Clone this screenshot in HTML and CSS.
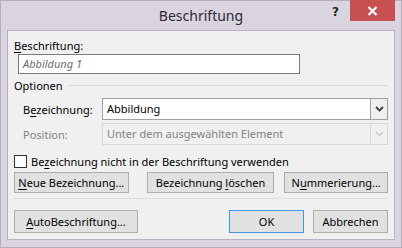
FILE: index.html
```html
<!DOCTYPE html>
<html>
<head>
<meta charset="utf-8">
<link rel="stylesheet" href="styles.css">
</head>
<body>
<div class="window">
  <div class="titlebar">
    <div class="title">Beschriftung</div>
    <div class="help">?</div>
    <div class="close">
      <svg width="11" height="10" viewBox="0 0 11 10"><path d="M1.5 1 L9.5 9 M9.5 1 L1.5 9" stroke="#fff" stroke-width="2.2" fill="none"/></svg>
    </div>
  </div>
  <div class="client">
    <div class="label top"><u>B</u>eschriftung:</div>
    <div class="textbox">Abbildung 1</div>
    <div class="group">
      <span>Optionen</span><span class="rule"></span>
    </div>
    <div class="row r1">
      <span class="rlabel">B<u>e</u>zeichnung:</span>
      <div class="combo">
        <span class="ctext">Abbildung</span>
        <span class="drop"><svg width="9" height="6" viewBox="0 0 9 6"><path d="M1 1 L4.5 4.5 L8 1" stroke="#404040" stroke-width="1.8" fill="none"/></svg></span>
      </div>
    </div>
    <div class="row r2 disabled">
      <span class="rlabel">Position:</span>
      <div class="combo">
        <span class="ctext">Unter dem ausgewählten Element</span>
        <span class="drop"><svg width="9" height="6" viewBox="0 0 9 6"><path d="M1 1 L4.5 4.5 L8 1" stroke="#c8c8c8" stroke-width="1.4" fill="none"/></svg></span>
      </div>
    </div>
    <div class="check">
      <span class="box"></span>
      <span class="ctext2">Be<u>z</u>eichnung nicht in der Beschriftung verwenden</span>
    </div>
    <div class="btnrow">
      <div class="btn b1"><span><u>N</u>eue Bezeichnung...</span></div>
      <div class="btn b2"><span>Bezeichnung <u>l</u>öschen</span></div>
      <div class="btn b3"><span>N<u>u</u>mmerierung...</span></div>
    </div>
    <div class="sep"></div>
    <div class="footer">
      <div class="btn auto"><span><u>A</u>utoBeschriftung...</span></div>
      <div class="spacer"></div>
      <div class="btn ok"><span>OK</span></div>
      <div class="btn cancel"><span>Abbrechen</span></div>
    </div>
  </div>
</div>
</body>
</html>
```

FILE: styles.css
```css
* { box-sizing: border-box; }
html, body { margin: 0; padding: 0; }
body {
  width: 402px; height: 248px; overflow: hidden;
  font-family: "Noto Sans", "Open Sans", sans-serif;
  font-size: 11px; color: #000;
}
u { text-decoration: underline; text-underline-offset: 2px; }
.window {
  width: 402px; height: 248px;
  background: #dad3e0;
  border: 1px solid #b4adbd;
  display: flex; flex-direction: column;
}
.titlebar {
  height: 29px; position: relative;
}
.title {
  position: absolute; left: 0; right: 0; top: 5px;
  text-align: center; font-size: 14px; color: #2b2b35;
}
.help {
  position: absolute; left: 331px; top: 4px;
  font-family: "DejaVu Sans", sans-serif; font-weight: bold; font-size: 12px; color: #222;
}
.close {
  position: absolute; left: 349px; top: -1px; width: 45px; height: 21px;
  background: #c75050;
  display: flex; align-items: center; justify-content: center;
}
.client {
  margin: 0 6px 7px 6px;
  flex: 1;
  background: #f0f0f0;
  border: 1px solid #b9b2c2;
  padding: 7px 6px 0 6px;
  display: flex; flex-direction: column;
}
.label.top { height: 16px; line-height: 16px; }
.textbox {
  margin-left: 4px;
  width: 282px; height: 20px;
  border: 1px solid #7a7a7a; background: #fff;
  font-style: italic; color: #6d6d6d;
  line-height: 18px; padding-left: 4px;
}
.group {
  margin-top: 3px; height: 17px; line-height: 17px;
  display: flex; align-items: center;
}
.group .rule { flex: 1; height: 1px; background: #dcdcdc; margin-left: 6px; }
.row { display: flex; align-items: center; height: 22px; padding-left: 9px; }
.r1 { margin-top: 4px; }
.r2 { margin-top: 3px; }
.rlabel { width: 79px; }
.combo {
  flex: 1; height: 22px; display: flex;
  border: 1px solid #a0a0a0; background: #fff;
}
.ctext { flex: 1; line-height: 20px; padding-left: 4px; }
.drop {
  width: 17px; display: flex; align-items: center; justify-content: center;
  border-left: 1px solid #a0a0a0; background: #efefef;
}
.disabled .rlabel { color: #838383; }
.disabled .combo { border-color: #d9d9d9; background: #f0f0f0; color: #838383; }
.disabled .drop { border-left-color: #d9d9d9; background: #f0f0f0; }
.check {
  margin-top: 8px; display: flex; align-items: center; height: 16px;
}
.check .box {
  width: 13px; height: 13px; border: 1px solid #333; background: #fff;
  margin-right: 4px;
}
.btnrow { display: flex; margin-top: 3px; }
.btn {
  height: 21px; border: 1px solid #adadad; background: #e1e1e1;
  display: flex; align-items: center; justify-content: center;
  white-space: nowrap;
}
.b1 { width: 115px; }
.b2 { width: 128px; margin-left: 18px; }
.b3 { width: 104px; margin-left: 10px; }
.sep { margin-top: 5px; height: 1px; background: #dcdcdc; }
.footer { display: flex; margin-top: 11px; }
.footer .btn { height: 23px; }
.auto { width: 124px; }
.spacer { flex: 1; }
.ok { width: 75px; border-color: #3c97e6; }
.cancel { width: 75px; margin-left: 9px; }
```
